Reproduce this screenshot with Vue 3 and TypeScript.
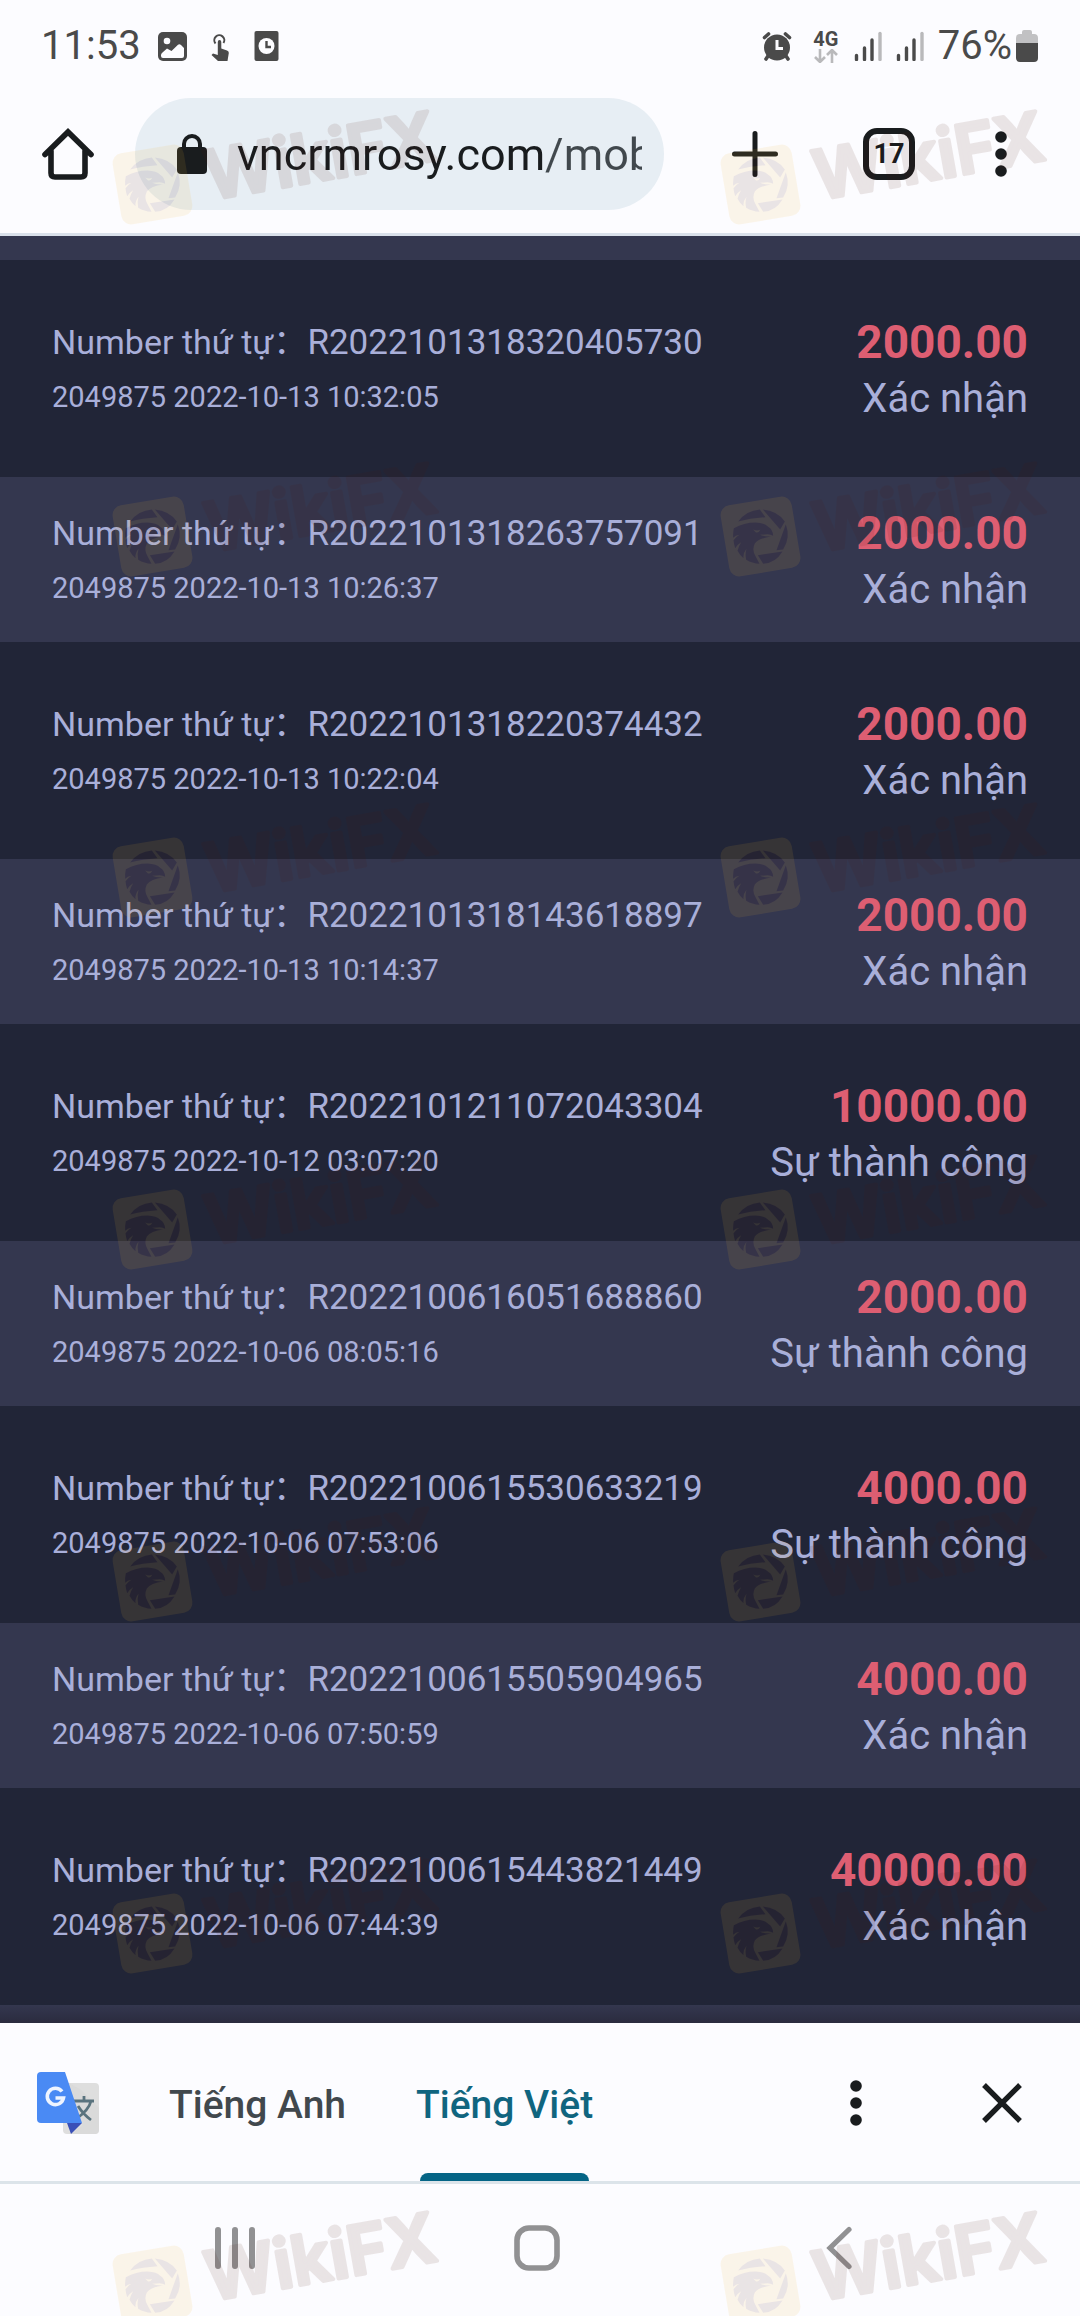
<script setup lang="ts">
import { ref } from 'vue'

interface Order {
  id: string
  account: string
  time: string
  amount: string
  status: string
}

const address = ref('vncrmrosy.com/mobile')
const activeLanguage = ref('vi')

const languages = [
  { code: 'en', label: 'Tiếng Anh' },
  { code: 'vi', label: 'Tiếng Việt' },
]

const orders: Order[] = [
  { id: 'R2022101318320405730', account: '2049875', time: '2022-10-13 10:32:05', amount: '2000.00', status: 'Xác nhận' },
  { id: 'R2022101318263757091', account: '2049875', time: '2022-10-13 10:26:37', amount: '2000.00', status: 'Xác nhận' },
  { id: 'R2022101318220374432', account: '2049875', time: '2022-10-13 10:22:04', amount: '2000.00', status: 'Xác nhận' },
  { id: 'R2022101318143618897', account: '2049875', time: '2022-10-13 10:14:37', amount: '2000.00', status: 'Xác nhận' },
  { id: 'R2022101211072043304', account: '2049875', time: '2022-10-12 03:07:20', amount: '10000.00', status: 'Sự thành công' },
  { id: 'R2022100616051688860', account: '2049875', time: '2022-10-06 08:05:16', amount: '2000.00', status: 'Sự thành công' },
  { id: 'R2022100615530633219', account: '2049875', time: '2022-10-06 07:53:06', amount: '4000.00', status: 'Sự thành công' },
  { id: 'R2022100615505904965', account: '2049875', time: '2022-10-06 07:50:59', amount: '4000.00', status: 'Xác nhận' },
  { id: 'R2022100615443821449', account: '2049875', time: '2022-10-06 07:44:39', amount: '40000.00', status: 'Xác nhận' },
]
</script>

<template>
  <div class="screen">
    <header class="top">
      <div class="status-bar">
        <span class="status-text">11:53</span>
        <svg class="status-icon" viewBox="0 0 30 30" aria-hidden="true">
          <rect width="29" height="29" y="1" rx="5" fill="#4a4a4a" />
          <circle cx="9" cy="10" r="3.3" fill="#fcfcff" />
          <path d="M3 24 Q3 22.500 4.500 21.500 L9 17.500 L13.500 20 L20 13.800 Q21.500 12.800 23 14 L26 17 V25 Q26 27 24 27 H5 Q3 27 3 25Z" fill="#fcfcff" />
        </svg>
        <svg class="status-icon" viewBox="0 0 30 30" aria-hidden="true">
          <path d="M10.500 12.500 A5 5 0 1 1 18.500 12" fill="none" stroke="#4a4a4a" stroke-width="2" />
          <path d="M12.800 11 Q12.800 9 14.500 9 Q16.300 9 16.300 11 V17.500 L22 19.500 Q24 20.200 23.800 22 L22.500 30 H13 L6.500 24 L8 22.600 L12.800 24Z" fill="#4a4a4a" />
        </svg>
        <svg class="status-icon" viewBox="0 0 30 30" aria-hidden="true">
          <rect x="2.500" width="24" height="30" rx="2" fill="#4a4a4a" />
          <circle cx="14.500" cy="15" r="8" fill="#fcfcff" />
          <path d="M14.500 10 V16 H19" fill="none" stroke="#4a4a4a" stroke-width="2.400" />
        </svg>

        <svg class="status-icon alarm" viewBox="0 0 30 30" aria-hidden="true">
          <path d="M2.500 6.500 L6.500 3 M27.500 6.500 L23.500 3" stroke="#4a4a4a" stroke-width="3.600" stroke-linecap="round" />
          <path d="M6 25 L4 28 M24 25 L26 28" stroke="#4a4a4a" stroke-width="3.600" stroke-linecap="round" />
          <circle cx="15" cy="16.500" r="13" fill="#4a4a4a" />
          <path d="M15 9 V17.500 H21" fill="none" stroke="#fcfcff" stroke-width="3" />
        </svg>
        <span class="network">
          <span class="network-type">4G</span>
          <svg width="26" height="14" viewBox="0 0 26 14" aria-hidden="true">
            <path d="M7 0 V12 M2 8 L7 13 L12 8 M19 14 V2 M14 6 L19 1 L24 6" fill="none" stroke="#b9b9bb" stroke-width="2.600" />
          </svg>
        </span>
        <svg v-for="sim in 2" :key="sim" class="signal" viewBox="0 0 28 30" aria-hidden="true">
          <g stroke-width="3.400" stroke-linecap="round" stroke="#4a4a4a">
            <path d="M2.500 24.500 V28.500 M10.500 17 V28.500 M18 9 V28.500" />
            <path d="M26 2.500 V28.500" stroke="#b9b9bb" />
          </g>
        </svg>
        <span class="status-text">76%</span>
        <svg class="battery" viewBox="0 0 22 32" aria-hidden="true">
          <path d="M6 2 Q6 0 8 0 H14 Q16 0 16 2 V4 H18 Q22 4 22 8 V13 H0 V8 Q0 4 4 4 H6Z" fill="#c1c1c3" />
          <path d="M0 13 H22 V28 Q22 32 18 32 H4 Q0 32 0 28Z" fill="#4a4a4a" />
        </svg>
      </div>

      <div class="toolbar">
        <button class="home" type="button" aria-label="Home">
          <svg width="52" height="52" viewBox="0 0 52 52" aria-hidden="true">
            <path d="M3 26.500 L26 4 L49 26.500 M9 23 V45 Q9 49 13 49 H39 Q43 49 43 45 V23" fill="none" stroke="#191c1e" stroke-width="5.600" stroke-linecap="round" />
          </svg>
        </button>
        <div class="omnibox">
          <svg width="30" height="40" viewBox="0 0 30 40" aria-hidden="true">
            <path d="M7 15 V10 A8 8 0 0 1 23 10 V15" fill="none" stroke="#191c1e" stroke-width="4" />
            <rect y="13" width="30" height="27" rx="4" fill="#191c1e" />
          </svg>
          <input v-model="address" class="address" type="text" aria-label="Address" />
        </div>
        <button class="tool" type="button" aria-label="New tab">
          <svg width="46" height="46" viewBox="0 0 46 46" aria-hidden="true">
            <path d="M23 2.500 V43.500 M2.500 23 H43.500" stroke="#191c1e" stroke-width="5" stroke-linecap="round" />
          </svg>
        </button>
        <button class="tool" type="button" aria-label="Open tabs">
          <span class="tab-count">17</span>
        </button>
        <button class="tool tool-menu" type="button" aria-label="Menu">
          <svg width="12" height="48" viewBox="0 0 12 48" fill="#191c1e" aria-hidden="true">
            <circle cx="6" cy="7" r="5.800" /><circle cx="6" cy="24" r="5.800" /><circle cx="6" cy="41" r="5.800" />
          </svg>
        </button>
      </div>
    </header>

    <main class="page">
      <ul class="orders">
        <li v-for="order in orders" :key="order.id" class="order">
          <div class="details">
            <span class="order-id"><span class="order-label">Number thứ tự：</span>{{ order.id }}</span>
            <span class="order-time">{{ order.account }} {{ order.time }}</span>
          </div>
          <div class="result">
            <strong class="amount">{{ order.amount }}</strong>
            <span class="order-status">{{ order.status }}</span>
          </div>
        </li>
      </ul>
      <div class="page-end"></div>
    </main>

    <section class="translate-bar" aria-label="Translate">
      <svg class="translate-logo" width="62" height="62" viewBox="0 0 62 62" aria-hidden="true">
        <rect x="26" y="11" width="36" height="51" rx="4" fill="#dedede" />
        <path d="M32 11 L46 53 L34 62 H58 Q62 62 62 58 V36 L44 18Z" fill="#d6d6d6" opacity=".5" />
        <path d="M37 29 H57 M47 24 V29 M54 29 Q52 38 39 47 M41 34 Q46 42 54 48" fill="none" stroke="#5a737e" stroke-width="2.800" />
        <path d="M30 51 H45 L34 62Z" fill="#3a50b8" />
        <path d="M4 0 H28 L45 51 H4 Q0 51 0 47 V4 Q0 0 4 0Z" fill="#4a8af4" />
        <path d="M25 19.500 A8.200 8.200 0 1 0 26.500 26 H18.500" fill="none" stroke="#eef4ff" stroke-width="3.600" />
      </svg>
      <div class="languages" role="tablist">
        <button
          v-for="language in languages"
          :key="language.code"
          class="language"
          :class="{ active: language.code === activeLanguage }"
          type="button"
          role="tab"
          :aria-selected="language.code === activeLanguage"
          @click="activeLanguage = language.code"
        >
          {{ language.label }}
        </button>
      </div>
      <button class="bar-action" type="button" aria-label="Translate options">
        <svg width="12" height="48" viewBox="0 0 12 48" fill="#191c1e" aria-hidden="true">
          <circle cx="6" cy="7" r="5.800" /><circle cx="6" cy="24" r="5.800" /><circle cx="6" cy="41" r="5.800" />
        </svg>
      </button>
      <button class="bar-action" type="button" aria-label="Close">
        <svg width="40" height="40" viewBox="0 0 40 40" aria-hidden="true">
          <path d="M2 2 L38 38 M38 2 L2 38" stroke="#191c1e" stroke-width="5.400" />
        </svg>
      </button>
    </section>

    <nav class="system-nav" aria-label="System">
      <button type="button" aria-label="Recent apps">
        <svg width="40" height="44" viewBox="0 0 40 44" aria-hidden="true">
          <path d="M3 4 V40 M20 4 V40 M37 4 V40" stroke="#919193" stroke-width="6" stroke-linecap="round" />
        </svg>
      </button>
      <button type="button" aria-label="Home screen">
        <svg width="46" height="46" viewBox="0 0 46 46" aria-hidden="true">
          <rect x="3" y="3" width="40" height="40" rx="12" fill="none" stroke="#919193" stroke-width="5.600" />
        </svg>
      </button>
      <button type="button" aria-label="Back">
        <svg width="26" height="44" viewBox="0 0 26 44" aria-hidden="true">
          <path d="M23 3.500 L4 22 L23 40.500" fill="none" stroke="#919193" stroke-width="5.200" stroke-linecap="round" />
        </svg>
      </button>
    </nav>

    <div class="watermarks" aria-hidden="true">
      <svg v-for="mark in 14" :key="mark" class="watermark" width="328" height="116" viewBox="0 0 328 116">
        <rect x="4.500" y="38.500" width="72" height="72" rx="10" fill="#f0b432" transform="rotate(-9.500 40.500 74.500)" />
        <g transform="translate(40.500 74.500) scale(.3333) translate(-155 -291)" fill="#50190f">
          <path d="M88 246 Q112 213 153 210 L170 233 Q125 236 88 246Z" />
          <path d="M162 210 Q206 214 228 246 L214 270Z" />
          <path d="M231 254 Q246 294 223 330 L203 332Z" />
          <path d="M147 347 L221 336 Q200 371 163 373Z" />
          <path d="M75 266 Q105 249 140 249 Q168 250 178 262 Q192 270 193 289 Q182 282 168 285 L154 286 Q166 292 187 291 Q150 296 138 312 Q128 332 141 352 L152 373 Q130 372 112 361 Q108 345 113 328 Q102 342 104 356 Q92 346 86 334 Q90 318 97 308 Q84 316 79 326 Q75 314 74 302 Q84 290 92 286 Q80 288 73 295 Q72 278 75 266Z" />
          <path d="M133 270 Q144 275 154 271 Q150 281 141 278Z" fill="#f0b432" />
        </g>
        <text x="98" y="90" class="mark-text" transform="rotate(-10 98 90)">WikiFX</text>
      </svg>
    </div>
  </div>
</template>

<style>
body {
  margin: 0;
  background: #fcfcff;
}
</style>

<style scoped>
.screen {
  position: relative;
  display: flex;
  flex-direction: column;
  min-height: 100vh;
  overflow: hidden;
  background: #fcfcff;
  font-family: Roboto, "Noto Sans CJK SC", sans-serif;
  color: #191c1e;
}

button {
  display: flex;
  align-items: center;
  justify-content: center;
  margin: 0;
  padding: 0;
  border: 0;
  background: none;
  font: inherit;
  color: inherit;
}

svg {
  display: block;
  flex: none;
}

.top {
  border-bottom: 3px solid #d9e0ea;
}

.status-bar {
  display: flex;
  align-items: center;
  height: 68px;
  padding: 12px 42px 0 41px;
  color: #4a4a4a;
}

.status-text {
  font-size: 40px;
  line-height: 48px;
}

.status-icon {
  width: 30px;
  height: 30px;
  margin-left: 17px;
}

.alarm {
  margin-left: auto;
  margin-right: 20px;
}

.network {
  display: flex;
  flex-direction: column;
  align-items: center;
  width: 28px;
  margin-right: 14px;
}

.network-type {
  font-size: 20px;
  font-weight: 700;
  line-height: 20px;
}

.signal {
  width: 28px;
  height: 30px;
  margin-right: 14px;
}

.battery {
  width: 22px;
  height: 32px;
  margin-left: 4px;
}

.toolbar {
  display: flex;
  align-items: center;
  padding: 18px 34px 23px 42px;
}

.omnibox {
  display: flex;
  flex: 1;
  align-items: center;
  gap: 30px;
  min-width: 0;
  height: 112px;
  box-sizing: border-box;
  margin: 0 24px 0 41px;
  padding: 0 22px 0 42px;
  border-radius: 56px;
  background: #e7eef4;
}

.address {
  flex: 1;
  min-width: 0;
  padding: 2px 0 0;
  border: 0;
  outline: 0;
  background: linear-gradient(to right, #191c1e 308px, #41484d 308px);
  background-clip: text;
  font: inherit;
  font-size: 45px;
  line-height: 60px;
  color: #191c1e;
  -webkit-text-fill-color: transparent;
}

.tool {
  width: 134px;
  height: 112px;
}

.tool-menu {
  width: 90px;
}

.tab-count {
  width: 52px;
  height: 52px;
  box-sizing: border-box;
  border: 6px solid #191c1e;
  border-radius: 14px;
  font-size: 27px;
  font-weight: 700;
  line-height: 40px;
  text-align: center;
}

.page {
  display: flex;
  flex: 1;
  flex-direction: column;
  padding-top: 24px;
  background: #34374f;
}

.orders {
  margin: 0;
  padding: 0;
  list-style: none;
}

.order {
  display: flex;
  justify-content: space-between;
  padding: 30px 52px 28px;
  color: #a9afd9;
}

.order:nth-child(odd) {
  padding-top: 56px;
  padding-bottom: 54px;
  background: #212537;
}

.details,
.result {
  display: flex;
  flex-direction: column;
}

.details {
  gap: 8px;
}

.result {
  align-items: flex-end;
  gap: 7px;
}

.order-id {
  font-size: 35px;
  line-height: 52px;
}

.order-label {
  font-size: 34px;
}

.order-time {
  font-size: 29px;
  line-height: 40px;
}

.amount {
  font-size: 46px;
  font-weight: 700;
  line-height: 52px;
  color: #dd5e72;
}

.order-status {
  font-size: 40px;
  line-height: 48px;
}

.page-end {
  flex: 1;
  min-height: 18px;
  background: linear-gradient(#34374f, #2a2b3e);
}

.translate-bar {
  display: flex;
  align-items: center;
  height: 156px;
  padding: 2px 5px 0 37px;
  border-bottom: 3px solid #dce4ea;
}

.languages {
  display: flex;
  align-self: stretch;
  margin: 0 auto 0 35px;
}

.language {
  position: relative;
  padding: 4px 35px 0;
  font-size: 39px;
  font-weight: 500;
  color: #41484d;
}

.language.active {
  color: #10657f;
}

.language.active::after {
  content: "";
  position: absolute;
  right: 39px;
  bottom: 0;
  left: 39px;
  height: 8px;
  border-radius: 8px 8px 0 0;
  background: #056586;
}

.bar-action {
  width: 146px;
  height: 100%;
}

.system-nav {
  display: flex;
  height: 128px;
  padding: 0 90px 4px 84px;
}

.system-nav button {
  flex: 1;
}

.watermarks {
  position: absolute;
  inset: 0;
  display: grid;
  grid-template-rows: 352px 341px repeat(4, 352px) 106px;
  grid-template-columns: auto auto;
  justify-content: space-between;
  padding: 110px 32px 0 112px;
  overflow: hidden;
  pointer-events: none;
}

.watermark {
  opacity: 0.1;
  overflow: visible;
}

.mark-text {
  fill: #50190f;
  stroke: #50190f;
  stroke-width: 4px;
  stroke-linejoin: round;
  font-family: Inter, Roboto, sans-serif;
  font-size: 68px;
  font-weight: 600;
}
</style>
